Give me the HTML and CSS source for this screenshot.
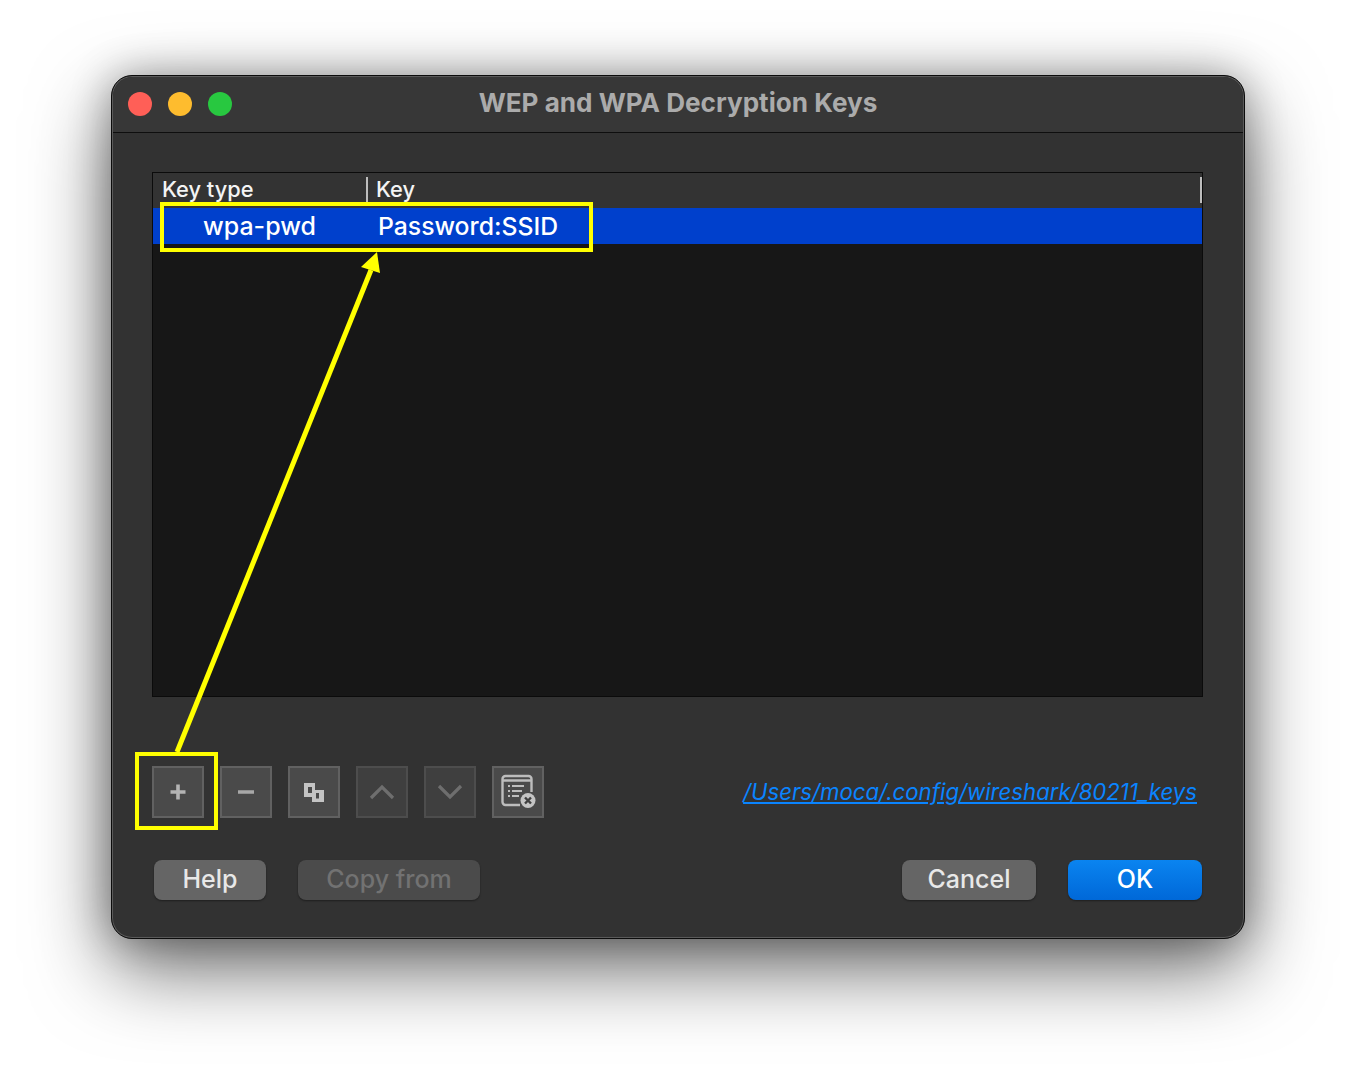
FILE: index.html
```html
<!DOCTYPE html>
<html lang="en">
<head>
<meta charset="utf-8">
<title>WEP and WPA Decryption Keys</title>
<link rel="stylesheet" href="styles.css">
</head>
<body>
<main class="window">
  <header class="titlebar">
    <div class="lights">
      <span class="light red"></span>
      <span class="light amber"></span>
      <span class="light green"></span>
    </div>
    <h1 class="title">WEP and WPA Decryption Keys</h1>
  </header>
  <section class="content">
    <div class="table">
      <div class="thead">
        <div class="th th-type">Key type</div>
        <div class="th th-key">Key</div>
      </div>
      <div class="row">
        <div class="cell cell-type">wpa-pwd</div>
        <div class="cell cell-key">Password:SSID</div>
      </div>
    </div>
    <div class="toolbar">
      <button class="tool"><svg width="52" height="52" viewBox="0 0 52 52"><path d="M26 18.500v15M18.500 26h15" stroke="#b4b4b4" stroke-width="3.600" fill="none"/></svg></button>
      <button class="tool"><svg width="52" height="52" viewBox="0 0 52 52"><path d="M18 26h16" stroke="#a8a8a8" stroke-width="3.400" fill="none"/></svg></button>
      <button class="tool"><svg width="52" height="52" viewBox="0 0 52 52"><path fill-rule="evenodd" d="M16 17h11v7h9v12H24v-5h-8zM20 21v6h4v-6zM28 27v5.500h3V27z" fill="#c4c4c4"/></svg></button>
      <button class="tool off"><svg width="52" height="52" viewBox="0 0 52 52"><path d="M15 32l11-11 11 11" stroke="#6e6e6e" stroke-width="3.200" fill="none"/></svg></button>
      <button class="tool off"><svg width="52" height="52" viewBox="0 0 52 52"><path d="M15 20l11 11 11-11" stroke="#6e6e6e" stroke-width="3.200" fill="none"/></svg></button>
      <button class="tool"><svg width="52" height="52" viewBox="0 0 52 52"><path d="M28 39H13.500a3 3 0 0 1-3-3V13a3 3 0 0 1 3-3h23a3 3 0 0 1 3 3v13" stroke="#bdbdbd" stroke-width="2.400" fill="none"/><path d="M10.500 14.500h29" stroke="#bdbdbd" stroke-width="2.500"/><path d="M16 20h2M20 20h12M16 25h2M20 25h10M16 30h2M20 30h7" stroke="#bdbdbd" stroke-width="2"/><circle cx="36" cy="34.500" r="7.500" fill="#c4c4c4"/><path d="M33 31.500l6 6M39 31.500l-6 6" stroke="#3f3f3f" stroke-width="2.400"/></svg></button>
      <a class="path" href="#">/Users/moca/.config/wireshark/80211_keys</a>
    </div>
    <div class="actions">
      <button class="btn btn-help">Help</button>
      <button class="btn btn-copy" disabled>Copy from</button>
      <button class="btn btn-cancel">Cancel</button>
      <button class="btn btn-ok">OK</button>
    </div>
  </section>
</main>
<div class="mark mark-row"></div>
<div class="mark mark-add"></div>
<svg class="arrow" width="1356" height="1086" viewBox="0 0 1356 1086"><path d="M177 752L371 270" stroke="#ffff00" stroke-width="5" fill="none"/><path d="M377 252l3 21-19-6z" fill="#ffff00"/></svg>
</body>
</html>
```
FILE: styles.css
```css
* { box-sizing: border-box; }
html, body { margin: 0; height: 1086px; overflow: hidden; background: #fff; }
body { position: relative; padding: 75px 111px; font-family: Inter, "Liberation Sans", sans-serif; }
.window {
  width: 1134px; height: 864px; background: #323232; border-radius: 21px;
  border: 1px solid #0c0c0c;
  box-shadow: inset 0 0 0 1px #5a5a5a, 0 30px 80px rgba(0,0,0,.58), 0 0 40px rgba(0,0,0,.3);
  overflow: hidden;
}
.titlebar {
  height: 56px; display: flex; align-items: center; position: relative;
  background: #373737; border-bottom: 1px solid #0e0e0e; padding: 0 0 0 15px;
  margin: 1px 1px 0; border-radius: 20px 20px 0 0;
}
.lights { display: flex; gap: 16px; margin-top: -1px; }
.light { width: 24px; height: 24px; border-radius: 50%; }
.red { background: #ff5f57; }
.amber { background: #febc2e; }
.green { background: #28c840; }
.title {
  position: absolute; left: 0; right: 0; top: 11px; margin: 0; text-align: center;
  font-size: 26.100px; line-height: 30px; font-weight: 700; color: #ababab;
}
.content { padding: 39px 41px 0 40px; }
.table {
  height: 525px; background: #171717; border: 1px solid #0b0b0b;
  width: 1051px;
}
.thead { height: 35px; display: flex; background: #333; color: #f4f4f4; font-size: 21.800px; font-weight: 500; position: relative; }
.th-type { width: 215px; padding-left: 9px; border-right: 2px solid #bdbdbd; margin: 4px 0; line-height: 25px; }
.th-key { flex: 1; padding-left: 8px; border-right: 2px solid #bdbdbd; margin: 4px 0 5px 0; line-height: 25px; }
.row { height: 36px; background: #0040cc; display: flex; color: #fff; font-size: 25px; font-weight: 450; line-height: 36px; }
.cell-type { width: 215px; padding-left: 50px; }
.cell-key { padding-left: 10px; font-size: 24.750px; }
.toolbar { display: flex; align-items: center; gap: 16px; height: 52px; margin-top: 69px; }
.tool {
  width: 52px; height: 52px; padding: 0; margin: 0; background: #4a4a4a; border: 2px solid #616161;
  display: flex; align-items: center; justify-content: center;
}
.tool svg { flex: none; }
.tool.off { background: #3f3f3f; border-color: #4d4d4d; }
.path {
  margin-left: auto; margin-right: 6px; color: #0a84ff; font-size: 22.200px; font-weight: 450; font-style: italic;
  text-decoration: underline; text-underline-offset: 2px; line-height: 30px; white-space: nowrap;
}
.actions { display: flex; height: 40px; margin-top: 42px; padding-left: 2px; padding-right: 1px; }
.btn {
  height: 40px; border: 0; border-radius: 8px; font-family: inherit; font-size: 25px; font-weight: 450; line-height: 38px; padding: 0 0 2px;
  background: #656565; color: #e8e8e8; box-shadow: 0 1px 2px rgba(0,0,0,.4);
}
.btn-help { width: 112px; }
.btn-copy { width: 182px; margin-left: 32px; background: #4b4b4b; color: #727272; }
.btn-cancel { width: 134px; margin-left: auto; }
.btn-ok { width: 134px; margin-left: 32px; background: linear-gradient(#0a84f0, #0068d8); color: #fff; }
.mark { position: absolute; border: 4px solid #ffff00; }
.mark-row { left: 160px; top: 202px; width: 433px; height: 50px; }
.mark-add { left: 135px; top: 752px; width: 83px; height: 78px; }
.arrow { position: absolute; left: 0; top: 0; pointer-events: none; }
```
